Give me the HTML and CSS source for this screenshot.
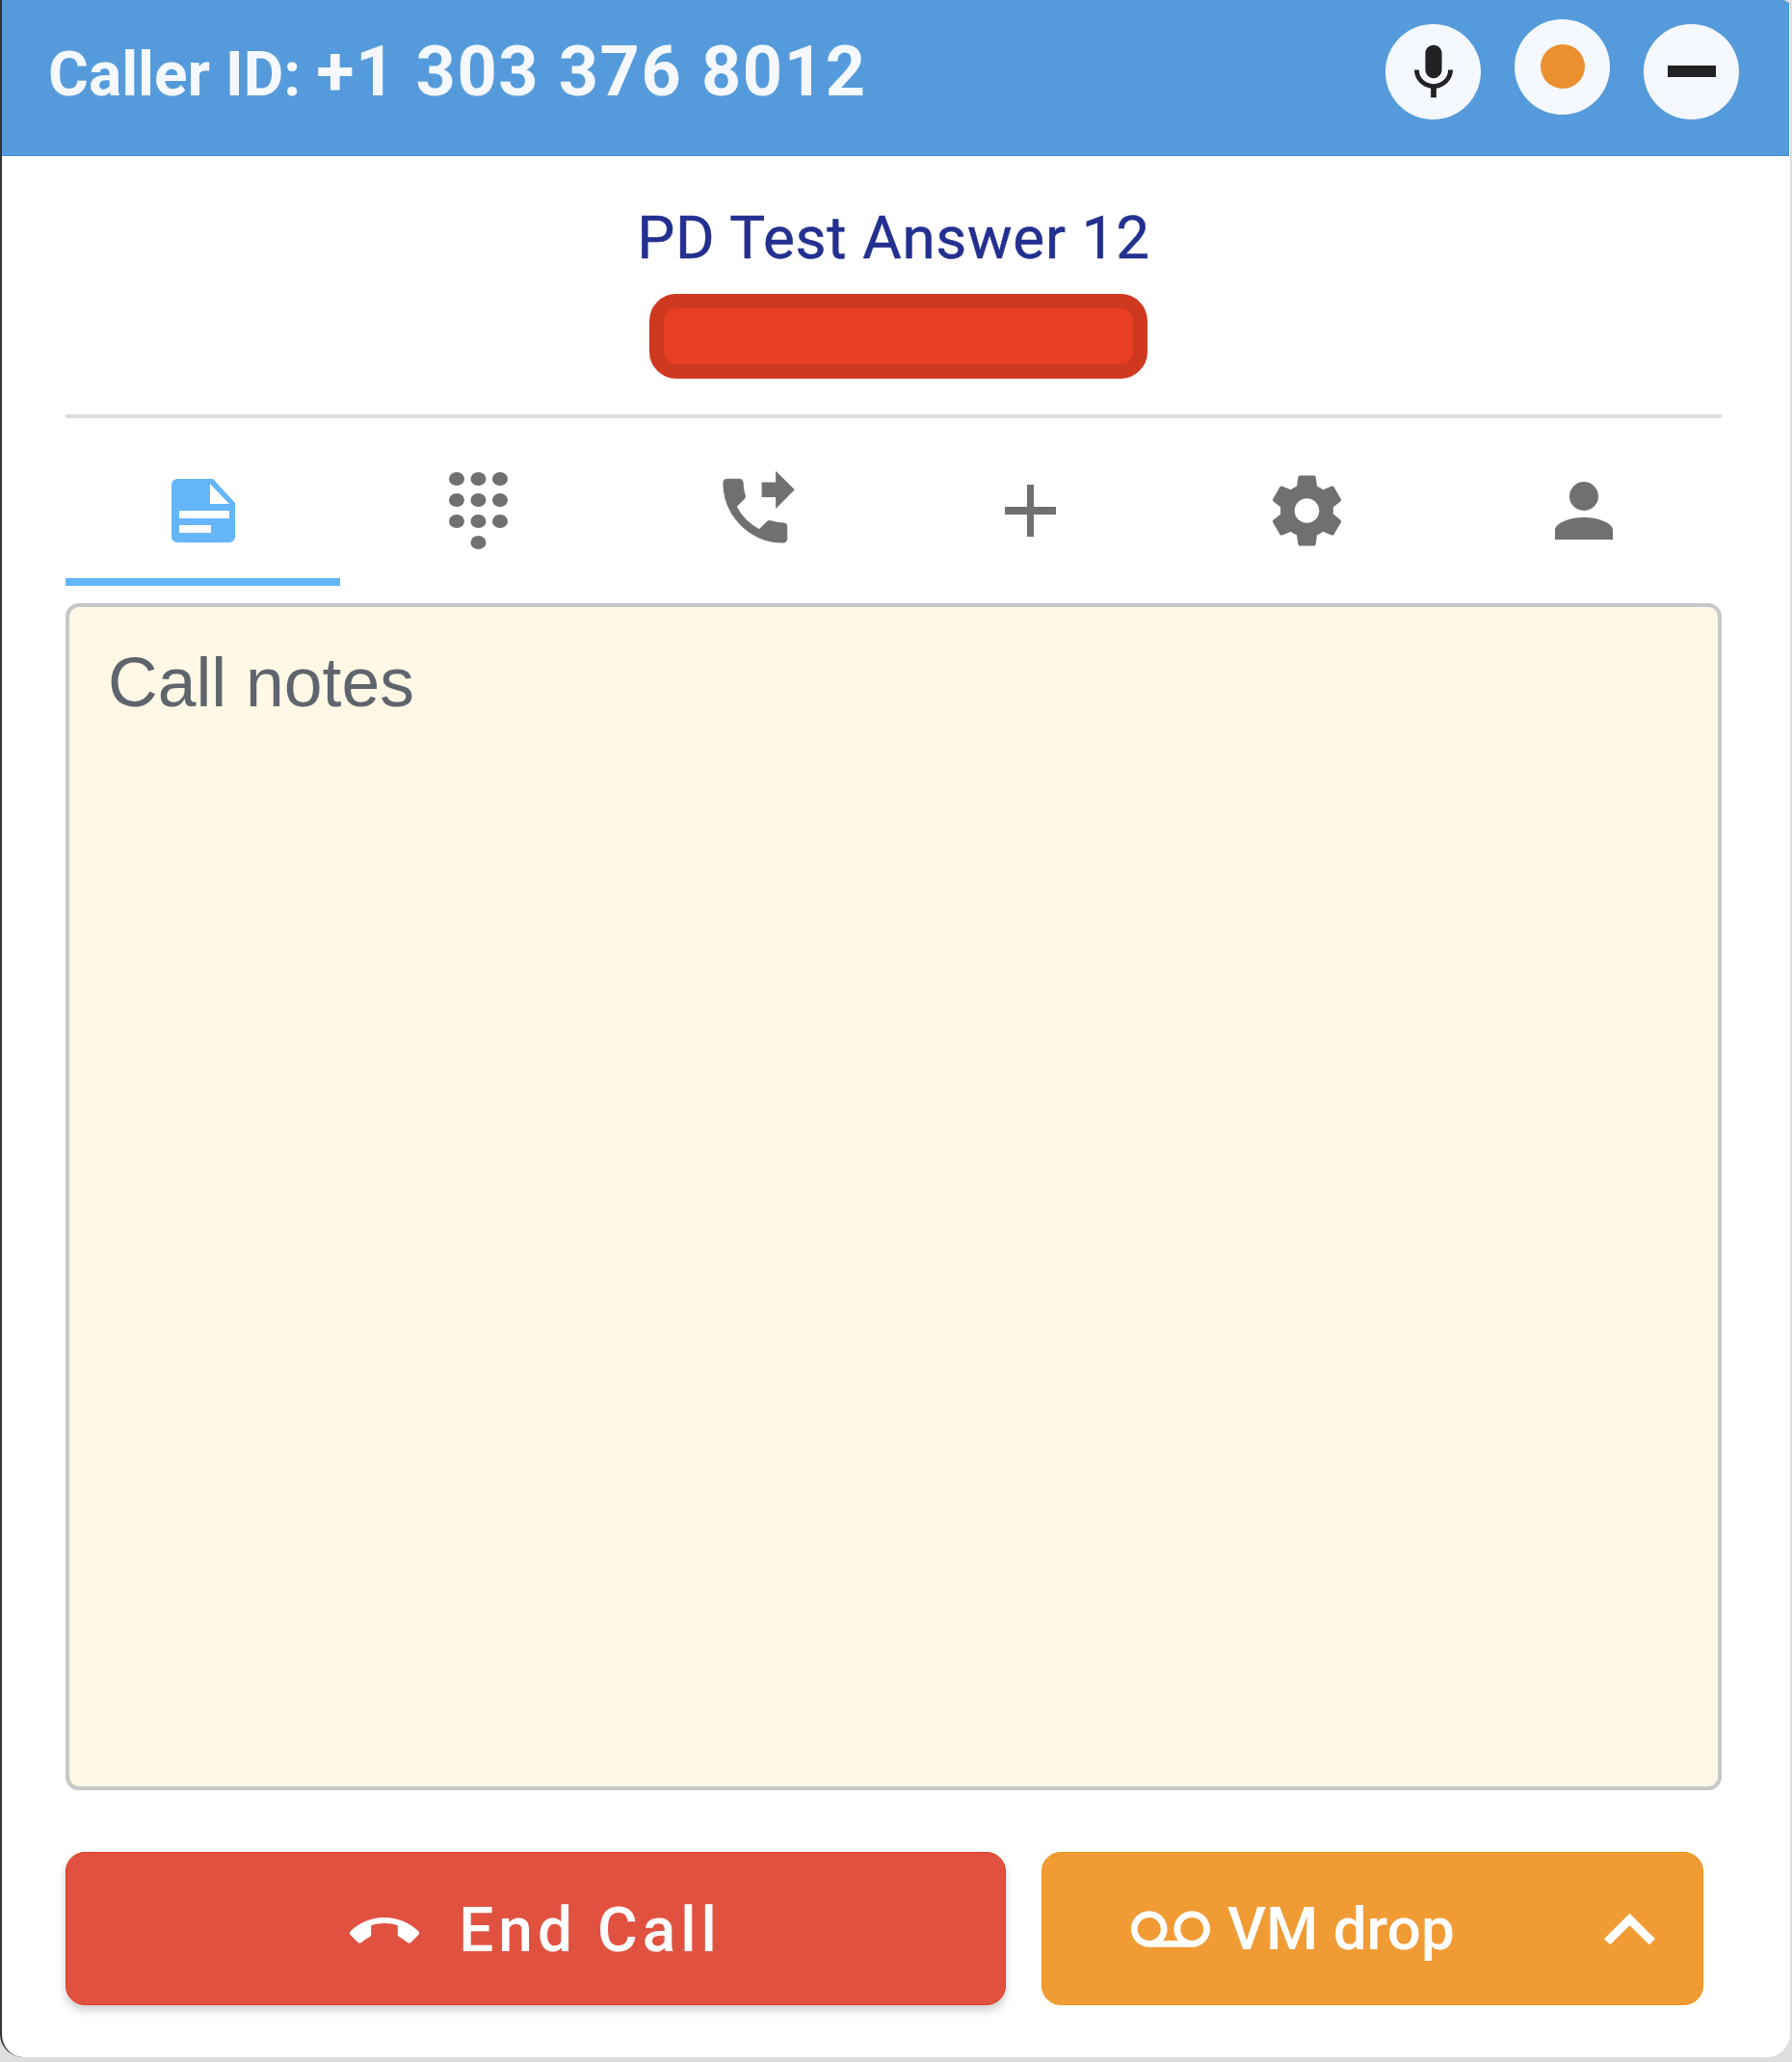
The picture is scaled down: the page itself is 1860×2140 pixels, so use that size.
FILE: index.html
```html
<!DOCTYPE html>
<html lang="en">
<head>
    <meta charset="UTF-8">
    <title>Call panel</title>
    <link rel="stylesheet" href="styles.css">
</head>
<body>
    <div class="window">
        <div class="top-bar">
            <div class="caller-id"><span class="caller-label">Caller ID:</span> <span class="caller-number">+1 303 376 8012</span></div>
            <div class="top-actions">
                <div class="round-btn">
                    <svg class="icon-mic" viewBox="5 2 14 19"><path d="M12 14c1.66 0 2.99-1.34 2.99-3L15 5c0-1.66-1.34-3-3-3S9 3.34 9 5v6c0 1.66 1.34 3 3 3zm5.3-3c0 3-2.54 5.1-5.3 5.1S6.7 14 6.7 11H5c0 3.41 2.72 6.23 6 6.72V21h2v-3.28c3.28-.48 6-3.3 6-6.72h-1.7z"/></svg>
                </div>
                <div class="round-btn raised"><div class="record-dot"></div></div>
                <div class="round-btn"><div class="minus-bar"></div></div>
            </div>
        </div>
        <div class="content">
            <div class="contact">
                <div class="contact-name">PD Test Answer 12</div>
                <div class="contact-redacted"></div>
            </div>
            <div class="tabs">
                <div class="tab active">
                    <svg class="icon-doc" viewBox="0 0 66 66"><path fill-rule="evenodd" d="M6 0H43L66 25V60a6 6 0 0 1-6 6H6a6 6 0 0 1-6-6V6a6 6 0 0 1 6-6zM40 5V26H60zM8 33V41H60V33zM8 48V56H41V48z"/></svg>
                </div>
                <div class="tab">
                    <svg class="icon-dial" viewBox="0 0 61 84">
                        <ellipse cx="8" cy="9" rx="8" ry="7"/><ellipse cx="30.5" cy="9" rx="8" ry="7"/><ellipse cx="53" cy="9" rx="8" ry="7"/>
                        <ellipse cx="8" cy="31" rx="8" ry="7"/><ellipse cx="30.5" cy="31" rx="8" ry="7"/><ellipse cx="53" cy="31" rx="8" ry="7"/>
                        <ellipse cx="8" cy="53" rx="8" ry="7"/><ellipse cx="30.5" cy="53" rx="8" ry="7"/><ellipse cx="53" cy="53" rx="8" ry="7"/>
                        <ellipse cx="30.5" cy="75" rx="8" ry="7"/>
                    </svg>
                </div>
                <div class="tab">
                    <svg class="icon-forward" viewBox="3 1 20 20"><path d="M18 11l5-5-5-5v3h-4v4h4v3zm2 4.5c-1.25 0-2.45-.2-3.57-.57-.35-.11-.74-.03-1.02.24l-2.2 2.2c-2.83-1.44-5.15-3.75-6.59-6.59l2.2-2.21c.28-.26.36-.65.25-1C8.7 6.45 8.5 5.25 8.5 4c0-.55-.45-1-1-1H4c-.55 0-1 .45-1 1 0 9.39 7.61 17 17 17 .55 0 1-.45 1-1v-3.5c0-.55-.45-1-1-1z"/></svg>
                </div>
                <div class="tab">
                    <svg class="icon-plus" viewBox="0 0 53 54"><path d="M23 0h7v23h23v8H30v23h-7V31H0v-8h23z"/></svg>
                </div>
                <div class="tab">
                    <svg class="icon-gear" viewBox="2.3 2 19.4 20"><path fill-rule="evenodd" d="M19.43 12.98c.04-.32.07-.64.07-.98s-.03-.66-.07-.98l2.11-1.65c.19-.15.24-.42.12-.64l-2-3.46c-.12-.22-.39-.3-.61-.22l-2.49 1c-.52-.4-1.08-.73-1.69-.98l-.38-2.65C14.46 2.18 14.25 2 14 2h-4c-.25 0-.46.18-.49.42l-.38 2.65c-.61.25-1.17.59-1.69.98l-2.49-1c-.23-.09-.49 0-.61.22l-2 3.46c-.13.22-.07.49.12.64l2.11 1.65c-.04.32-.07.65-.07.98s.03.66.07.98l-2.11 1.65c-.19.15-.24.42-.12.64l2 3.46c.12.22.39.3.61.22l2.49-1c.52.4 1.08.73 1.69.98l.38 2.65c.03.24.24.42.49.42h4c.25 0 .46-.18.49-.42l.38-2.65c.61-.25 1.17-.59 1.69-.98l2.49 1c.23.09.49 0 .61-.22l2-3.46c.12-.22.07-.49-.12-.64l-2.01-1.65zM12 15.5c-1.93 0-3.5-1.57-3.5-3.5s1.57-3.5 3.5-3.5 3.5 1.57 3.5 3.5-1.57 3.5-3.5 3.5z"/></svg>
                </div>
                <div class="tab">
                    <svg class="icon-person" viewBox="0 0 60 60"><ellipse cx="30" cy="15" rx="15" ry="15"/><path d="M0 60V50C0 43 15 37 30 37S60 43 60 50V60Z"/></svg>
                </div>
            </div>
            <div class="notes">Call notes</div>
            <div class="call-actions">
                <div class="btn btn-end">
                    <svg class="icon-hangup" viewBox="0 7 24 9"><path d="M12 9c-1.6 0-3.15.25-4.6.72v3.1c0 .39-.23.74-.56.9-.98.49-1.87 1.12-2.66 1.85-.18.18-.43.28-.7.28-.28 0-.53-.11-.71-.29L.29 13.08c-.18-.17-.29-.42-.29-.7 0-.28.11-.53.29-.71C3.34 8.78 7.46 7 12 7s8.66 1.78 11.71 4.67c.18.18.29.43.29.71 0 .28-.11.53-.29.71l-2.48 2.48c-.18.18-.43.29-.71.29-.27 0-.52-.11-.7-.28-.79-.74-1.69-1.36-2.67-1.85-.33-.16-.56-.5-.56-.9v-3.1C15.15 9.25 13.6 9 12 9z"/></svg>
                    <span>End Call</span>
                </div>
                <div class="btn btn-vm">
                    <svg class="icon-vm" viewBox="0 6 24 11"><path fill-rule="evenodd" d="M18.5 6C15.46 6 13 8.46 13 11.5c0 1.33.47 2.55 1.26 3.5H9.74c.79-.95 1.26-2.17 1.26-3.5C11 8.46 8.54 6 5.5 6S0 8.46 0 11.5 2.46 17 5.5 17h13c3.04 0 5.5-2.46 5.5-5.5S21.54 6 18.5 6zm-13 9C3.57 15 2 13.43 2 11.5S3.57 8 5.5 8 9 9.57 9 11.5 7.43 15 5.5 15zm13 0c-1.93 0-3.5-1.57-3.5-3.5S16.57 8 18.5 8 22 9.57 22 11.5 20.43 15 18.5 15z"/></svg>
                    <span class="vm-label">VM drop</span>
                    <svg class="icon-chevron" viewBox="6 8 12 7.41"><path d="M12 8l-6 6 1.41 1.41L12 10.83l4.59 4.58L18 14z"/></svg>
                </div>
            </div>
        </div>
    </div>
</body>
</html>
```

FILE: styles.css
```css
html, body {
    margin: 0;
    height: 100%;
}
body {
    background: #dedede;
    font-family: 'Roboto', sans-serif;
    overflow: hidden;
}
.window {
    box-sizing: border-box;
    width: 1858px;
    height: 2135px;
    background: #fff;
    border-left: 2px solid #333;
    border-radius: 0 8px 24px 24px;
    overflow: hidden;
}
.top-bar {
    height: 162px;
    box-sizing: border-box;
    margin-right: 1px;
    background: #559bdb;
    border-bottom: 1px solid #3d90de;
    border-right: 1px solid #3d90de;
    display: flex;
    justify-content: space-between;
    align-items: center;
    padding: 0 51px 13px 48px;
    color: #f5f8ff;
}
.caller-id {
    font-weight: 700;
    white-space: nowrap;
    display: flex;
    align-items: baseline;
    gap: 16px;
}
.caller-label {
    font-size: 64px;
}
.caller-number {
    font-size: 72px;
    letter-spacing: 1.6px;
}
.top-actions {
    display: flex;
    gap: 35px;
}
.round-btn {
    width: 99px;
    height: 99px;
    border-radius: 50%;
    background: #f5f8ff;
    display: flex;
    justify-content: center;
    align-items: center;
}
.round-btn.raised {
    margin-top: -5px;
    margin-bottom: 5px;
}
.icon-mic {
    width: 40px;
    height: 56px;
    fill: #222;
}
.record-dot {
    width: 46px;
    height: 46px;
    border-radius: 50%;
    background: #ea9030;
}
.minus-bar {
    width: 50px;
    height: 12px;
    background: #222;
}
.content {
    padding: 0 71px 0 66px;
}
.contact {
    height: 272px;
    box-sizing: border-box;
    border-bottom: 4px solid #ddd;
    display: flex;
    flex-direction: column;
    align-items: center;
}
.contact-name {
    margin-top: 50px;
    font-size: 62px;
    line-height: 70px;
    color: #23308f;
    letter-spacing: 0.7px;
    -webkit-text-stroke: 0.5px #23308f;
}
.contact-redacted {
    box-sizing: border-box;
    width: 517px;
    height: 88px;
    margin-top: 23px;
    margin-left: 9px;
    background: #e83e24;
    border: 15px solid #cf3920;
    border-radius: 28px;
}
.tabs {
    display: flex;
    height: 174px;
    fill: #707070;
}
.tab {
    flex: 1;
    box-sizing: border-box;
    padding-top: 18px;
    display: flex;
    justify-content: center;
    align-items: center;
}
.tab.active {
    flex: none;
    width: 285px;
    fill: #64b5f9;
    border-bottom: 8px solid #64b5f9;
    padding-top: 26px;
}
.icon-doc { width: 66px; height: 66px; }
.icon-dial { width: 61px; height: 84px; }
.icon-forward {
    width: 73px;
    height: 73px;
    margin-left: 8px;
    margin-top: -8px;
    overflow: visible;
    stroke: #707070;
    stroke-width: 0.3;
}
.icon-plus { width: 53px; height: 54px; }
.icon-gear { width: 71px; height: 76px; }
.icon-person { width: 60px; height: 60px; }
.notes {
    box-sizing: border-box;
    height: 1232px;
    margin-top: 18px;
    padding: 36px 40px;
    background: #fff8e6;
    border: 4px solid #c8c8c8;
    border-radius: 14px;
    font-family: 'Liberation Sans', sans-serif;
    font-size: 71.5px;
    line-height: 84px;
    color: #5f656c;
}
.call-actions {
    display: flex;
    gap: 37px;
    margin-top: 64px;
}
.btn {
    box-sizing: border-box;
    height: 159px;
    border-radius: 20px;
    display: flex;
    align-items: center;
    color: #fff;
    fill: #fff;
}
.btn-end {
    width: 976px;
    justify-content: center;
    gap: 41px;
    padding-top: 3px;
    background: #e1513f;
    border: 1px solid #e03a25;
    box-shadow: 0 5px 10px rgba(0, 0, 0, 0.2);
    font-size: 64px;
    font-weight: 500;
    letter-spacing: 5px;
}
.btn-vm {
    width: 687px;
    padding: 0 49px 0 92px;
    background: #f19b35;
    border: 1px solid #f09214;
    font-size: 62px;
    font-weight: 500;
}
.icon-hangup { width: 72px; height: 27px; }
.icon-vm { width: 82px; height: 38px; }
.vm-label { margin-left: 18px; flex: 1; }
.icon-chevron { width: 53px; height: 34px; }
```
